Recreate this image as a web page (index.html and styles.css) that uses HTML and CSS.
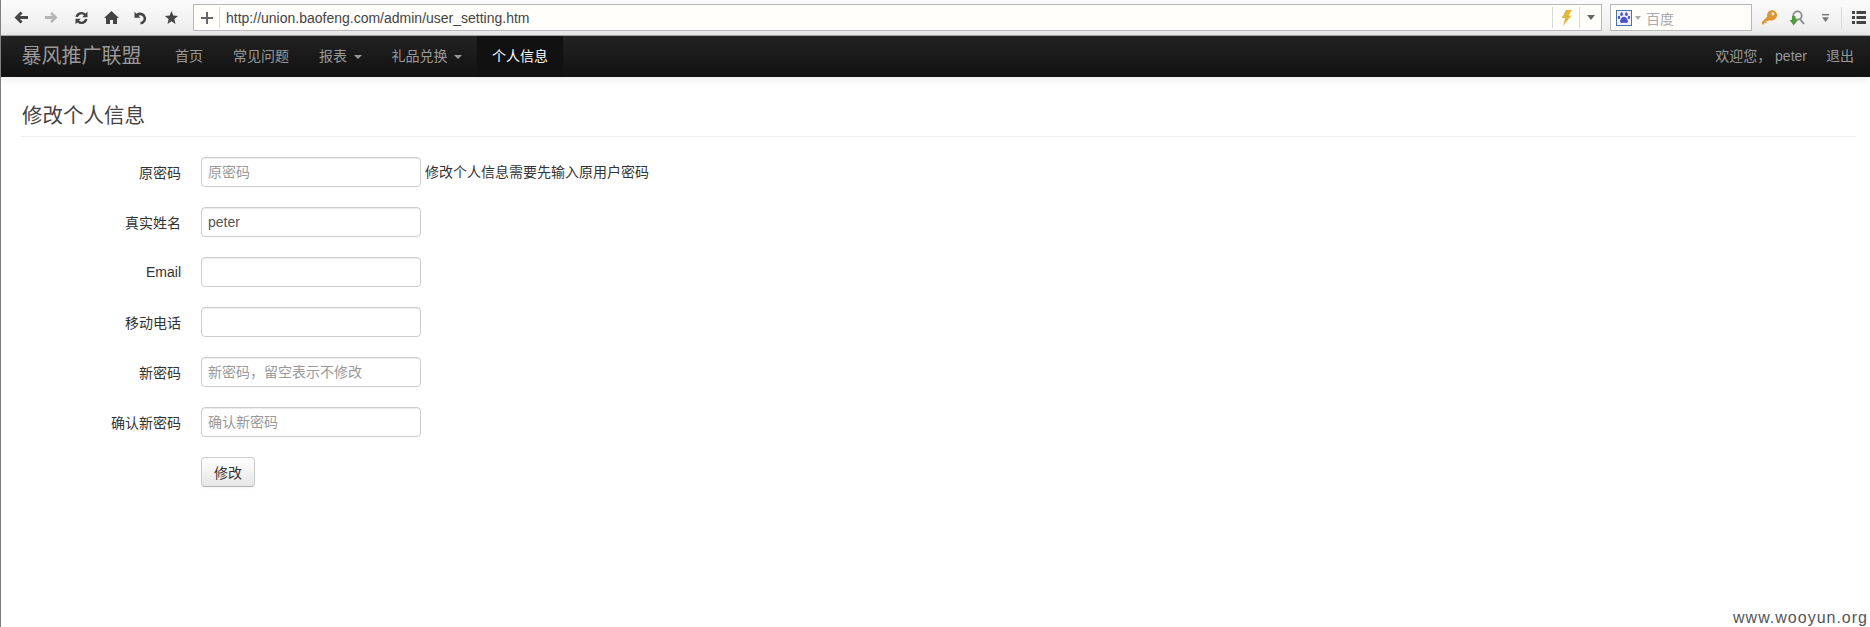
FILE: index.html
```html
<!DOCTYPE html>
<html lang="en">
<head>
    <meta charset="UTF-8">
    <meta name="viewport" content="width=device-width, initial-scale=1.0">
    <title>修改个人信息</title>
    <link rel="stylesheet" href="styles.css">
</head>
<body>
    <!-- browser chrome -->
    <div class="toolbar">
        <span class="tool">
            <svg width="14" height="13" viewBox="0 0 14 13"><path d="M6.5 0.5 L8.6 2.6 L6 5 H14 V8 H6 L8.6 10.4 L6.5 12.5 L0.5 6.5 Z" fill="#444"/></svg>
        </span>
        <span class="tool">
            <svg width="13" height="13" viewBox="0 0 14 13"><path d="M7.5 0.5 L5.4 2.6 L8 5 H0 V8 H8 L5.4 10.4 L7.5 12.5 L13.5 6.5 Z" fill="#b4b4b4"/></svg>
        </span>
        <span class="tool">
            <svg width="15" height="14" viewBox="0 0 15 14"><path d="M1.5 6 A6 6 0 0 1 11.5 2.6 L13.5 0.8 V6.2 H8.2 L10 4.4 A3.6 3.6 0 0 0 4 6 Z M13.5 8 A6 6 0 0 1 3.5 11.4 L1.5 13.2 V7.8 H6.8 L5 9.6 A3.6 3.6 0 0 0 11 8 Z" fill="#444"/></svg>
        </span>
        <span class="tool">
            <svg width="15" height="13" viewBox="0 0 15 13"><path d="M7.5 0 L15 7 H13 V13 H9 V9 H6 V13 H2 V7 H0 Z" fill="#444"/></svg>
        </span>
        <span class="tool">
            <svg width="15" height="14" viewBox="0 0 15 14"><path d="M0.5 0.8 L2.5 2.8 A6 6 0 1 1 6.5 13.6 L6.5 11 A3.4 3.4 0 1 0 4.4 4.7 L6.4 6.7 H0.5 Z" fill="#444"/></svg>
        </span>
        <span class="tool">
            <svg width="13" height="13" viewBox="0 0 13 13"><path d="M6.5 0 L8.3 4.6 L13 4.9 L9.4 8 L10.5 13 L6.5 10.3 L2.5 13 L3.6 8 L0 4.9 L4.7 4.6 Z" fill="#444"/></svg>
        </span>
        <div class="address">
            <span class="address-plus">
                <svg width="12" height="12" viewBox="0 0 12 12"><path d="M5 0 H7 V5 H12 V7 H7 V12 H5 V7 H0 V5 H5 Z" fill="#666"/></svg>
            </span>
            <span class="address-url">http://union.baofeng.com/admin/user_setting.htm</span>
            <span class="address-bolt">
                <svg width="11" height="16" viewBox="0 0 11 16"><path d="M5 0 H11 L7.5 5.5 H10.5 L2 16 L4.2 8 H0.8 Z" fill="#e3b53a"/></svg>
            </span>
            <span class="address-more"><i class="tri"></i></span>
        </div>
        <div class="search">
            <svg class="search-logo" width="16" height="16" viewBox="0 0 16 16">
                <rect x="0.5" y="0.5" width="15" height="15" fill="#eef1fa" stroke="#4b74a8"/>
                <ellipse cx="5.6" cy="4.2" rx="1.3" ry="1.9" fill="#4c4fd0"/>
                <ellipse cx="10.4" cy="4.2" rx="1.3" ry="1.9" fill="#4c4fd0"/>
                <ellipse cx="3" cy="7.4" rx="1.2" ry="1.6" fill="#4c4fd0"/>
                <ellipse cx="13" cy="7.4" rx="1.2" ry="1.6" fill="#4c4fd0"/>
                <path d="M8 6.8 C10 6.8 12.4 10 11.8 12 C11.2 13.6 9.2 12.8 8 12.8 C6.8 12.8 4.8 13.6 4.2 12 C3.6 10 6 6.8 8 6.8 Z" fill="#4c4fd0"/>
            </svg>
            <i class="tri tri-small"></i>
            <span class="search-text">百度</span>
        </div>
        <span class="ext ext-key">
            <svg width="15" height="15" viewBox="0 0 15 15"><path d="M9.8 0 A5.2 5.2 0 1 1 7.6 9.9 L6.4 11 H4.6 V12.8 H2.8 L1.6 14.6 L0 14.4 V12 L5.3 6.6 A5.2 5.2 0 0 1 9.8 0 Z" fill="#dc9733"/><circle cx="10.9" cy="4" r="1.4" fill="#f6f6f6"/></svg>
        </span>
        <span class="ext ext-find">
            <svg width="16" height="16" viewBox="0 0 16 16"><circle cx="8.5" cy="5.5" r="4.2" fill="none" stroke="#8a8a8a" stroke-width="1.8"/><path d="M11 9 L15 14" stroke="#8a8a8a" stroke-width="2"/><path d="M3 6 H6.4 V10 H8.8 L4.7 15.4 L0.6 10 H3 Z" fill="#4e9a3f"/></svg>
        </span>
        <span class="ext ext-down">
            <svg width="7" height="8" viewBox="0 0 7 8"><rect x="0" y="0" width="7" height="1.4" fill="#777"/><path d="M0 3.2 H7 L3.5 8 Z" fill="#777"/></svg>
        </span>
        <span class="ext-sep"></span>
        <span class="ext ext-menu">
            <svg width="14" height="13" viewBox="0 0 14 13"><path d="M0 0 H3 V3 H0 Z M4.5 0 H14 V3 H4.5 Z M0 5 H3 V8 H0 Z M4.5 5 H14 V8 H4.5 Z M0 10 H3 V13 H0 Z M4.5 10 H14 V13 H4.5 Z" fill="#444"/></svg>
        </span>
    </div>

    <div class="navbar">
        <a class="brand">暴风推广联盟</a>
        <ul class="nav">
            <li><a>首页</a></li>
            <li><a>常见问题</a></li>
            <li><a>报表<b class="caret"></b></a></li>
            <li><a>礼品兑换<b class="caret"></b></a></li>
            <li class="active"><a>个人信息</a></li>
        </ul>
        <ul class="nav nav-right">
            <li><a>欢迎您， peter</a></li>
            <li><a>退出</a></li>
        </ul>
    </div>

    <div class="content">
        <h3 class="page-title">修改个人信息</h3>
        <form class="form-horizontal">
            <div class="control-group">
                <label class="control-label">原密码</label>
                <input type="text" class="field" placeholder="原密码">
                <span class="help-inline">修改个人信息需要先输入原用户密码</span>
            </div>
            <div class="control-group">
                <label class="control-label">真实姓名</label>
                <input type="text" class="field" value="peter">
            </div>
            <div class="control-group">
                <label class="control-label">Email</label>
                <input type="text" class="field">
            </div>
            <div class="control-group">
                <label class="control-label">移动电话</label>
                <input type="text" class="field">
            </div>
            <div class="control-group">
                <label class="control-label">新密码</label>
                <input type="text" class="field" placeholder="新密码，留空表示不修改">
            </div>
            <div class="control-group">
                <label class="control-label">确认新密码</label>
                <input type="text" class="field" placeholder="确认新密码">
            </div>
            <div class="control-group">
                <span class="control-label"></span>
                <button type="button" class="btn">修改</button>
            </div>
        </form>
    </div>

    <div class="watermark">www.wooyun.org</div>
</body>
</html>
```

FILE: styles.css
```css
html, body {
    height: 100%;
}
body {
    margin: 0;
    border-left: 1px solid #808080;
    box-sizing: border-box;
    position: relative;
    overflow: hidden;
    background: #fff;
    color: #333;
    font-family: "Liberation Sans", "Noto Sans CJK SC", sans-serif;
    font-size: 14px;
}

/* browser toolbar */
.toolbar {
    display: flex;
    align-items: center;
    height: 35px;
    padding-left: 5px;
    background: linear-gradient(#fbfbfb, #ececec);
    border-bottom: 1px solid #a9a9a9;
}
.tool {
    display: flex;
    justify-content: center;
    width: 30px;
}
.address {
    display: flex;
    align-items: center;
    width: 1407px;
    height: 25px;
    margin-left: 7px;
    background: #fffefb;
    border: 1px solid #b8b8b8;
}
.address-plus {
    display: flex;
    justify-content: center;
    width: 25px;
    height: 21px;
    align-items: center;
    border-right: 1px solid #d8d8d8;
}
.address-url {
    flex: 1;
    padding-left: 6px;
    font-size: 14px;
    color: #444;
}
.address-bolt {
    display: flex;
    justify-content: center;
    align-items: center;
    width: 26px;
    height: 21px;
    border-left: 1px solid #d8d8d8;
    border-right: 1px solid #d8d8d8;
}
.address-more {
    display: flex;
    justify-content: center;
    align-items: center;
    width: 21px;
}
.tri {
    display: block;
    border-top: 5px solid #666;
    border-left: 4px solid transparent;
    border-right: 4px solid transparent;
}
.tri-small {
    margin-left: 3px;
    border-top: 4px solid #aaa;
    border-left: 3px solid transparent;
    border-right: 3px solid transparent;
}
.search {
    display: flex;
    align-items: center;
    width: 135px;
    height: 25px;
    margin-left: 8px;
    padding-left: 5px;
    background: #fffefb;
    border: 1px solid #b8b8b8;
}
.search-text {
    margin-left: 5px;
    color: #aaa;
}
.ext {
    display: flex;
    justify-content: center;
}
.ext-key {
    margin-left: 10px;
}
.ext-find {
    margin-left: 12px;
}
.ext-down {
    margin-left: 17px;
}
.ext-sep {
    width: 1px;
    height: 22px;
    margin-left: 12px;
    background: #dcdcdc;
}
.ext-menu {
    margin-left: 10px;
}

/* navbar */
.navbar {
    display: flex;
    align-items: stretch;
    height: 41px;
    background: linear-gradient(#222, #111);
    box-shadow: 0 1px 10px rgba(0, 0, 0, .1);
}
.brand {
    width: 138.5px;
    padding-left: 20.5px;
    font-size: 20px;
    line-height: 41px;
    color: #999;
}
.nav {
    display: flex;
    margin: 0;
    padding: 0;
    list-style: none;
}
.nav li a {
    display: block;
    padding: 0 15px;
    line-height: 41px;
    color: #999;
}
.nav li.active a {
    background: #111;
    color: #fff;
}
.nav-right {
    margin-left: auto;
}
.nav-right li a {
    padding: 0 16px 0 3px;
}
.caret {
    display: inline-block;
    margin-left: 6.5px;
    vertical-align: middle;
    border-top: 4px solid #999;
    border-left: 4px solid transparent;
    border-right: 4px solid transparent;
}

/* page */
.content {
    padding: 23px 14px 0 20px;
}
.page-title {
    margin: 0 0 20px;
    padding: 1px 0 5px 1px;
    border-bottom: 1px solid #eee;
    font-size: 20.5px;
    font-weight: normal;
    line-height: 30px;
    color: #444;
}
.control-group {
    display: flex;
    align-items: center;
    height: 30px;
    margin-bottom: 20px;
}
.control-label {
    width: 160px;
    text-align: right;
    flex-shrink: 0;
}
.field {
    width: 220px;
    height: 30px;
    margin-left: 20px;
    padding: 4px 6px;
    box-sizing: border-box;
    background: #fff;
    border: 1px solid #ccc;
    border-radius: 4px;
    box-shadow: inset 0 1px 1px rgba(0, 0, 0, .075);
    color: #555;
    font-family: inherit;
    font-size: 14px;
}
.field::placeholder {
    color: #999;
}
.help-inline {
    margin-left: 4px;
    padding-bottom: 2px;
    color: #333;
}
.btn {
    width: 54px;
    height: 30px;
    margin-left: 20px;
    padding: 0;
    background: linear-gradient(#fff, #e6e6e6);
    border: 1px solid #ccc;
    border-bottom-color: #b3b3b3;
    border-radius: 4px;
    box-shadow: 0 1px 2px rgba(0, 0, 0, .05);
    color: #333;
    font-family: inherit;
    font-size: 14px;
}

/* sits over the page, bottom right corner */
.watermark {
    position: absolute;
    right: 2px;
    bottom: 0;
    font-size: 16px;
    line-height: 18px;
    letter-spacing: 1px;
    color: #555;
}
```
